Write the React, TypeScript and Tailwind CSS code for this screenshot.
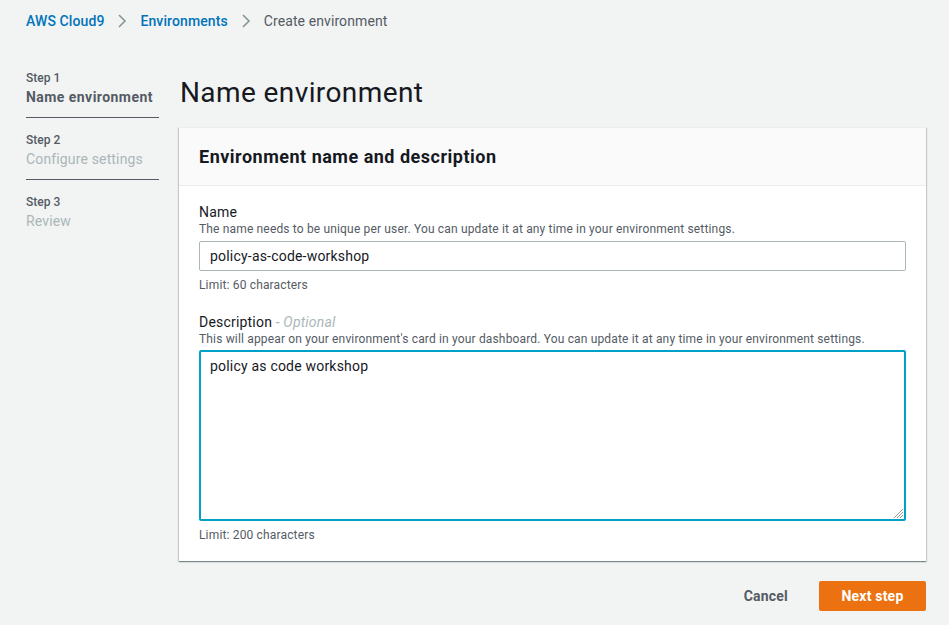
import React from "react";

function Chevron() {
  return (
    <svg width="10" height="16" viewBox="0 0 10 16" className="mx-[13px]">
      <path d="M2 2l6 6-6 6" fill="none" stroke="#879596" strokeWidth="1.6" />
    </svg>
  );
}

export default function App() {
  const font = { fontFamily: "Roboto, 'Open Sans', sans-serif" };
  return (
    <div className="w-[949px] h-[625px] bg-[#f2f3f3] text-[#16191f] overflow-hidden" style={font}>
      <div className="flex items-center h-[42px] pl-[26px] text-[14px] tracking-[0.1px]">
        <span className="text-[#0073bb] font-medium">AWS Cloud9</span>
        <Chevron />
        <span className="text-[#0073bb] font-medium">Environments</span>
        <Chevron />
        <span className="text-[#545b64]">Create environment</span>
      </div>
      <div className="flex pl-[26px] pt-[28px]">
        <div className="w-[133px] shrink-0 text-[#545b64]">
          <div className="border-b border-[#545b64] pb-[9px]">
            <div className="text-[12px] leading-[16px] font-medium">Step 1</div>
            <div className="text-[14px] leading-[22px] font-bold tracking-[0.45px] text-[#545b64]">Name environment</div>
          </div>
          <div className="border-b border-[#545b64] pt-[14px] pb-[9px]">
            <div className="text-[12px] leading-[16px] font-medium">Step 2</div>
            <div className="text-[14px] leading-[22px] tracking-[0.15px] text-[#aab7b8]">Configure settings</div>
          </div>
          <div className="pt-[14px]">
            <div className="text-[12px] leading-[16px] font-medium">Step 3</div>
            <div className="text-[14px] leading-[22px] tracking-[0.15px] text-[#aab7b8]">Review</div>
          </div>
        </div>
        <div className="ml-[20px] w-[747px]">
          <h1 className="text-[28px] leading-[36px] pl-[1px] mt-[5px] mb-[16px] tracking-[0.4px] text-[#16191f]">Name environment</h1>
          <div className="bg-white border-t border-[#eaeded] shadow-[0_1px_1px_0_rgba(0,28,36,0.3),1px_1px_1px_0_rgba(0,28,36,0.15),-1px_1px_1px_0_rgba(0,28,36,0.15)]">
            <div className="bg-[#fafafa] border-b border-[#eaeded] h-[58px] flex items-center px-[20px]">
              <h2 className="text-[18px] font-bold leading-[22px] tracking-[0.5px]">Environment name and description</h2>
            </div>
            <div className="px-[20px] pt-[16px] pb-[18px]">
              <div className="text-[14px] leading-[20px] tracking-[0.2px]">Name</div>
              <div className="text-[12px] leading-[15px] tracking-[0.16px] text-[#545b64]">The name needs to be unique per user. You can update it at any time in your environment settings.</div>
              <div className="mt-[4px] h-[30px] border border-[#aab7b8] rounded-[2px] flex items-center px-[10px] text-[14px] tracking-[0.2px]">policy-as-code-workshop</div>
              <div className="mt-[6px] text-[12px] leading-[16px] tracking-[0.16px] text-[#545b64]">Limit: 60 characters</div>
              <div className="mt-[19px] text-[14px] leading-[20px] tracking-[0.2px]">
                Description <span className="italic text-[#aab7b8]">- Optional</span>
              </div>
              <div className="text-[12px] leading-[15px] tracking-[0.16px] text-[#545b64]">This will appear on your environment's card in your dashboard. You can update it at any time in your environment settings.</div>
              <div className="relative mt-[3px] h-[171px] border-2 border-[#00a1c9] rounded-[2px] px-[9px] pt-[4px] text-[14px] tracking-[0.2px]">
                policy as code workshop
                <svg width="10" height="10" viewBox="0 0 10 10" className="absolute right-[1px] bottom-[1px]">
                  <path d="M10 1L1 10M10 4L4 10M10 7L7 10" stroke="#9a9a9a" strokeWidth="1" />
                </svg>
              </div>
              <div className="mt-[6px] text-[12px] leading-[16px] tracking-[0.16px] text-[#545b64]">Limit: 200 characters</div>
            </div>
          </div>
          <div className="flex justify-end items-center mt-[20px] gap-[31px]">
            <span className="text-[14px] font-bold tracking-[0.2px] text-[#545b64]">Cancel</span>
            <button className="h-[30px] w-[107px] bg-[#ec7211] text-white text-[14px] font-bold tracking-[0.2px] rounded-[2px]">Next step</button>
          </div>
        </div>
      </div>
    </div>
  );
}
